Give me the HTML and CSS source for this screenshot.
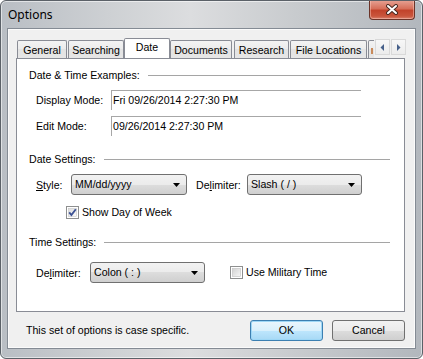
FILE: index.html
```html
<!DOCTYPE html>
<html lang="en">
<head>
  <meta charset="UTF-8">
  <title>Options</title>
  <link rel="stylesheet" href="styles.css">
</head>
<body>
  <div class="window">
    <div class="titlebar">
      <span class="title">Options</span>
      <button class="close-btn" title="Close">
        <svg width="14" height="11" viewBox="0 0 14 11">
          <path d="M3 2 L11 9 M11 2 L3 9" stroke="#4a2a22" stroke-width="4" stroke-linecap="round"/>
          <path d="M3 2 L11 9 M11 2 L3 9" stroke="#fff" stroke-width="2" stroke-linecap="round"/>
        </svg>
      </button>
    </div>
    <div class="client">
      <div class="tabstrip">
        <div class="tabs">
          <div class="tab" style="width:50px">General</div>
          <div class="tab gap1" style="width:56px">Searching</div>
          <div class="tab active" style="width:46px">Date</div>
          <div class="tab" style="width:62px">Documents</div>
          <div class="tab gap2" style="width:55px">Research</div>
          <div class="tab gap1" style="width:77px">File Locations</div>
          <div class="tab tab-more gap1"></div>
        </div>
        <div class="tab-scroll">
          <span class="scroll-btn">
            <svg width="5" height="7" viewBox="0 0 5 7"><polygon points="4,0 4,7 0.5,3.5" fill="#46608a"/></svg>
          </span>
          <span class="scroll-btn">
            <svg width="5" height="7" viewBox="0 0 5 7"><polygon points="1,0 1,7 4.5,3.5" fill="#46608a"/></svg>
          </span>
        </div>
      </div>

      <div class="panel">
        <div class="group-head"><span>Date &amp; Time Examples:</span></div>
        <div class="row field-row first">
          <span class="label field-label">Display Mode:</span>
          <div class="textbox">Fri 09/26/2014 2:27:30 PM</div>
        </div>
        <div class="row field-row">
          <span class="label field-label">Edit Mode:</span>
          <div class="textbox">09/26/2014 2:27:30 PM</div>
        </div>

        <div class="group-head date-head"><span>Date Settings:</span></div>
        <div class="row combo-row">
          <span class="label style-label"><u>S</u>tyle:</span>
          <div class="combo" style="width:116px">MM/dd/yyyy
            <svg class="drop" width="7" height="4" viewBox="0 0 7 4"><polygon points="0,0 7,0 3.5,4" fill="#000"/></svg>
          </div>
          <span class="label delim-label">De<u>l</u>imiter:</span>
          <div class="combo" style="width:115px">Slash ( / )
            <svg class="drop" width="7" height="4" viewBox="0 0 7 4"><polygon points="0,0 7,0 3.5,4" fill="#000"/></svg>
          </div>
        </div>
        <div class="row check-row">
          <label class="check">
            <svg width="13" height="13" viewBox="0 0 13 13">
              <defs>
                <linearGradient id="cb1" x1="0" y1="0" x2="1" y2="1">
                  <stop offset="0" stop-color="#dcdcdc"/>
                  <stop offset="1" stop-color="#fbfbfb"/>
                </linearGradient>
              </defs>
              <rect x="0.5" y="0.5" width="12" height="12" fill="#fff" stroke="#8e8f8f"/>
              <rect x="2.5" y="2.5" width="8" height="8" fill="url(#cb1)" stroke="#c6c6c6" stroke-width="0.6"/>
              <path d="M3.2 6.4 L5.4 9 L9.8 3.2" fill="none" stroke="#3d5294" stroke-width="1.9"/>
            </svg>
            <span>Show Day of Week</span>
          </label>
        </div>

        <div class="group-head time-head"><span>Time Settings:</span></div>
        <div class="row combo-row time-row">
          <span class="label time-label">De<u>l</u>imiter:</span>
          <div class="combo" style="width:115px">Colon ( : )
            <svg class="drop" width="7" height="4" viewBox="0 0 7 4"><polygon points="0,0 7,0 3.5,4" fill="#000"/></svg>
          </div>
          <label class="check military">
            <svg width="13" height="13" viewBox="0 0 13 13">
              <defs>
                <linearGradient id="cb2" x1="0" y1="0" x2="1" y2="1">
                  <stop offset="0" stop-color="#d2d2d2"/>
                  <stop offset="1" stop-color="#f7f7f7"/>
                </linearGradient>
              </defs>
              <rect x="0.5" y="0.5" width="12" height="12" fill="#fff" stroke="#8e8f8f"/>
              <rect x="2.5" y="2.5" width="8" height="8" fill="url(#cb2)" stroke="#c0c0c0" stroke-width="0.6"/>
            </svg>
            <span>Use Military Time</span>
          </label>
        </div>
      </div>

      <div class="footer">
        <span class="note">This set of options is case specific.</span>
        <div class="buttons">
          <button class="btn default">OK</button>
          <button class="btn">Cancel</button>
        </div>
      </div>
    </div>
  </div>
</body>
</html>
```
FILE: styles.css
```css
* { box-sizing: border-box; }
html, body { margin: 0; padding: 0; background: #fff; }
body { font-family: 'Liberation Sans', Arial, sans-serif; font-size: 10.6px; color: #000; }

.window { width: 423px; height: 359px; border: 1px solid #5b6168; border-radius: 6px; overflow: hidden;
  background: linear-gradient(90deg, #b9bec4 0%, #cdd0d3 25%, #dcdddf 45%, #c8cbce 70%, #b2b7bd 100%);
  box-shadow: inset 0 0 0 1px rgba(255,255,255,0.55); }

.titlebar { height: 27px; display: flex; justify-content: space-between; align-items: flex-start; }
.title { font-family: 'Noto Sans', 'Open Sans', sans-serif; font-size: 12px; line-height: 14px; margin: 7px 0 0 7px; color: #000; }
.close-btn { width: 46px; height: 20px; margin: -1px 7px 0 0; padding: 0; display: flex; align-items: center; justify-content: center;
  border: 1px solid #6b3328; border-top: none; border-radius: 0 0 4px 4px;
  background: linear-gradient(#e7a496 0%, #d66f5a 45%, #c2432b 55%, #c9553c 85%, #d9826e 100%);
  box-shadow: inset 0 0 0 1px rgba(255,210,200,0.45); }

.client { margin: 0 6px; height: 321px; background: #f0f0f0; border: 1px solid #848b94;
  box-shadow: inset 0 0 0 1px #fbfbfb; }

.tabstrip { display: flex; align-items: flex-end; height: 29px; padding-left: 9px; position: relative; z-index: 1; }
.tabs { width: 357px; height: 21px; display: flex; align-items: flex-end; overflow: hidden; }
.tab { flex: none; height: 18px; line-height: 18px; text-align: center; white-space: nowrap;
  border: 1px solid #898c95; border-bottom: none; border-radius: 2px 2px 0 0;
  background: linear-gradient(#f3f3f3, #ebebeb 50%, #e3e3e3 50%, #e6e6e6); }
.tab.gap1 { margin-left: 1px; }
.tab.gap2 { margin-left: 2px; }
.tab.active { height: 21px; line-height: 17px; margin-bottom: -1px; background: #fff; }
.tab-more { width: 40px; position: relative; }
.tab-more::before { content: ''; position: absolute; left: 2px; top: 7px; width: 2px; height: 6px; background: #c98a5a; }
.tab-scroll { display: flex; gap: 1px; margin: 0 0 3px 1px; }
.scroll-btn { width: 15px; height: 16px; display: flex; align-items: center; justify-content: center;
  border: 1px solid #d9d9d9; background: linear-gradient(#f7f7f7, #ececec); }

.panel { margin-left: 8px; width: 389px; height: 254px; background: #fff; border: 1px solid #898c95;
  padding: 9px 14px 0 12px; }

.group-head { height: 14px; line-height: 14px; display: flex; align-items: center; gap: 8px; }
.group-head::after { content: ''; flex: 1; border-top: 1px solid #a5a5a5; }
.date-head { margin-top: 16px; }
.time-head { margin-top: 16px; }

.row { display: flex; align-items: center; padding-left: 7px; }
.field-row { height: 20px; margin-top: 6px; }
.field-row.first { margin-top: 8px; }
.label { flex: none; white-space: nowrap; }
.field-label { width: 75px; }
.textbox { width: 250px; height: 20px; line-height: 19px; padding-left: 1px; white-space: nowrap;
  border-top: 1px solid #a7a7a7; border-left: 1px solid #a7a7a7; }

.combo-row { height: 21px; margin-top: 8px; }
.style-label { width: 35px; }
.delim-label { width: 51px; margin-left: 9px; }
.time-label { width: 54px; }
.time-row { margin-top: 13px; }
.combo { position: relative; height: 21px; line-height: 19px; padding-left: 3px; flex: none;
  border: 1px solid #707070; border-radius: 3px;
  background: linear-gradient(#f2f2f2, #ebebeb 50%, #dddddd 50%, #cfcfcf); }
.combo .drop { position: absolute; right: 6px; top: 8px; }

.check-row { height: 13px; margin-top: 11px; padding-left: 37px; }
.check { display: flex; align-items: center; gap: 3px; line-height: 13px; }
.check svg { flex: none; }
.military { margin-left: 25px; }

.footer { display: flex; justify-content: space-between; align-items: center; height: 36px; padding: 0 10px 0 18px; }
.buttons { display: flex; gap: 9px; }
.btn { width: 73px; height: 21px; padding: 0; font-family: inherit; font-size: 10.6px; color: #000;
  border: 1px solid #707070; border-radius: 3px;
  background: linear-gradient(#f2f2f2, #ebebeb 50%, #dddddd 50%, #cfcfcf); }
.btn.default { border-color: #3c7fb1; box-shadow: inset 0 0 0 1px #9ed7f6;
  background: linear-gradient(#eaf6fd, #d9f0fc 50%, #bee6fd 50%, #a7d9f5); }
```
